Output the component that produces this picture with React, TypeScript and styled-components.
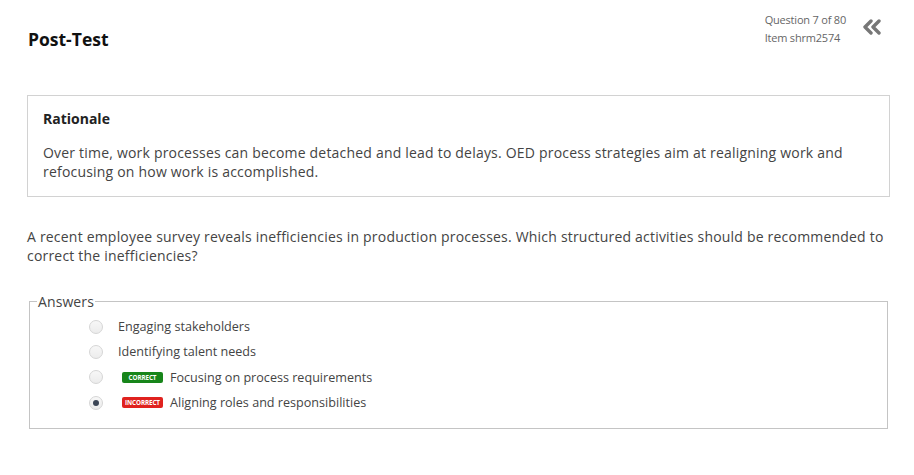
import styled, {createGlobalStyle} from 'styled-components';

const GlobalStyle = createGlobalStyle`
  body {
    margin: 0;
    background: #fff;
    font-family: "Open Sans", "Liberation Sans", sans-serif;
    color: #444;
  }
`;

const answers = [
    {label: 'Engaging stakeholders'},
    {label: 'Identifying talent needs'},
    {label: 'Focusing on process requirements', badge: 'correct' as const},
    {label: 'Aligning roles and responsibilities', badge: 'incorrect' as const, checked: true},
];

const ChevronsLeft = () => (
    <svg width="20" height="16" viewBox="0 0 20 16">
        <path d="M9 2 L3 8 L9 14" fill="none" stroke="#777" strokeWidth="3.4" strokeLinecap="round" strokeLinejoin="round" />
        <path d="M17 2 L11 8 L17 14" fill="none" stroke="#777" strokeWidth="3.4" strokeLinecap="round" strokeLinejoin="round" />
    </svg>
);

export default function App() {
    return (
        <Page>
            <GlobalStyle />
            <Header>
                <Title>Post-Test</Title>
                <Meta>
                    <MetaText>
                        <div>Question 7 of 80</div>
                        <div>Item shrm2574</div>
                    </MetaText>
                    <CollapseBtn>
                        <ChevronsLeft />
                    </CollapseBtn>
                </Meta>
            </Header>

            <RationaleBox>
                <RationaleTitle>Rationale</RationaleTitle>
                <RationaleText>
                    Over time, work processes can become detached and lead to delays. OED process strategies aim at realigning work and
                    refocusing on how work is accomplished.
                </RationaleText>
            </RationaleBox>

            <Question>
                A recent employee survey reveals inefficiencies in production processes. Which structured activities should be recommended to
                correct the inefficiencies?
            </Question>

            <Answers>
                <Legend>Answers</Legend>
                {answers.map(a => (
                    <AnswerRow key={a.label}>
                        <Radio $checked={!!a.checked} />
                        {a.badge && <Badge $kind={a.badge}>{a.badge}</Badge>}
                        <AnswerLabel>{a.label}</AnswerLabel>
                    </AnswerRow>
                ))}
            </Answers>
        </Page>
    );
}

const Page = styled.div`
  padding: 0 24px 0 27px;
`;

const Header = styled.div`
  display: flex;
  align-items: flex-start;
  justify-content: space-between;
  height: 95px;
`;

const Title = styled.h1`
  margin: 28px 0 0 1px;
  font-size: 17.5px;
  line-height: 23px;
  font-weight: 700;
  color: #111;
`;

const Meta = styled.div`
  display: flex;
  align-items: flex-start;
  gap: 16px;
  margin-top: 11px;
  margin-right: 8px;
`;

const MetaText = styled.div`
  font-size: 11px;
  line-height: 18px;
  color: #666;
  letter-spacing: -0.2px;
`;

const CollapseBtn = styled.div`
  margin-top: 8px;
  display: flex;
`;

const RationaleBox = styled.div`
  border: 1px solid #d2d2d2;
  padding: 14px 15px 15px;
`;

const RationaleTitle = styled.div`
  font-size: 14px;
  line-height: 18px;
  font-weight: 700;
  color: #222;
`;

const RationaleText = styled.p`
  margin: 15px 0 0;
  font-size: 14px;
  line-height: 19px;
  letter-spacing: 0.2px;
  color: #444;
`;

const Question = styled.p`
  margin: 30px 0 0;
  font-size: 14px;
  line-height: 19px;
  letter-spacing: 0.2px;
  color: #444;
`;

const Answers = styled.fieldset`
  margin: 27px 2px 0;
  padding: 3px 0 13px 59px;
  border: 1px solid #c4c4c4;
`;

const Legend = styled.legend`
  margin-left: -52px;
  padding: 0 1px;
  font-size: 14px;
  line-height: 19px;
  letter-spacing: 0.1px;
  color: #444;
`;

const AnswerRow = styled.div`
  display: flex;
  align-items: center;
  height: 25.3px;
`;

const Radio = styled.span<{$checked: boolean}>`
  position: relative;
  width: 14px;
  height: 14px;
  box-sizing: border-box;
  border-radius: 50%;
  border: 1px solid #d6d6d6;
  background: linear-gradient(#f7f7f7, #ececec);
  margin-right: 15px;

  &::after {
    content: '';
    display: ${props => props.$checked ? 'block' : 'none'};
    position: absolute;
    left: 3px;
    top: 3px;
    width: 6px;
    height: 6px;
    border-radius: 50%;
    background: #3c4656;
  }
`;

const Badge = styled.span<{$kind: 'correct' | 'incorrect'}>`
  display: inline-flex;
  align-items: center;
  justify-content: center;
  width: 41px;
  height: 11px;
  margin-left: 4px;
  margin-right: 7px;
  border-radius: 2px;
  background: ${props => props.$kind === 'correct' ? '#17851a' : '#e0221f'};
  color: #fff;
  font-size: 6.3px;
  font-weight: 700;
  text-transform: uppercase;
  letter-spacing: -0.1px;
`;

const AnswerLabel = styled.span`
  font-size: 12.6px;
  color: #444;
`;
